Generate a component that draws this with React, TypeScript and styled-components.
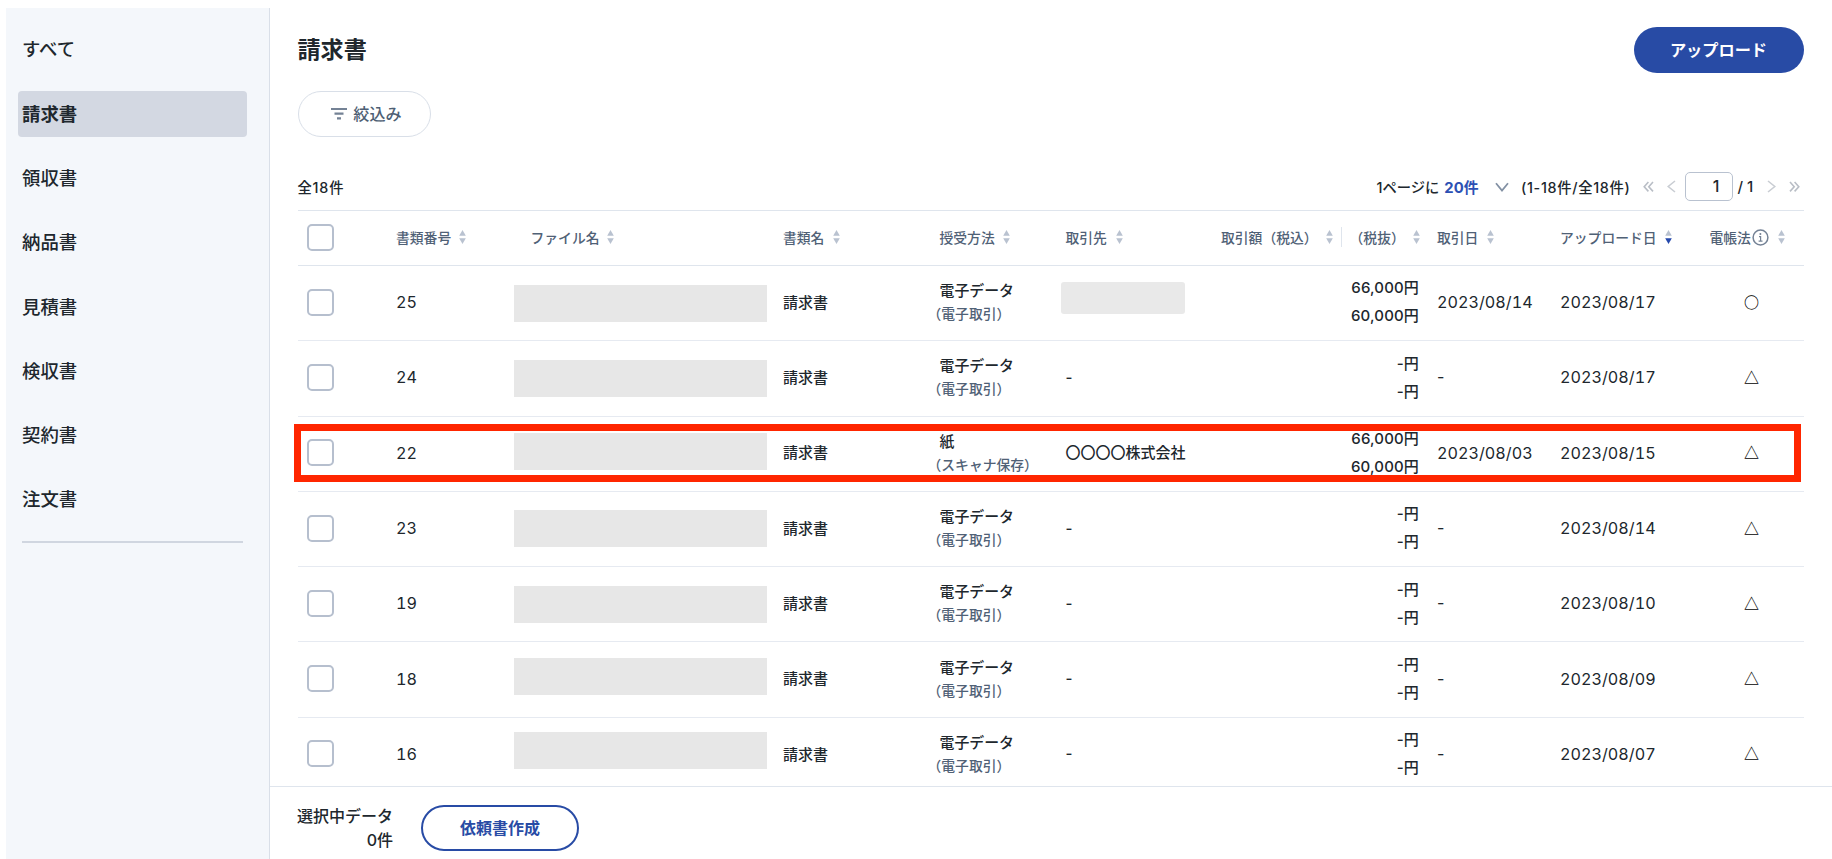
import React from "react";
import styled, { createGlobalStyle, css } from "styled-components";

const GlobalStyle = createGlobalStyle`
  * { box-sizing: border-box; }
  html, body { margin: 0; padding: 0; }
  body {
    background: #fff;
    color: #20272d;
    font-family: Inter, "Noto Sans CJK JP", sans-serif;
    font-weight: 500;
  }
  button, input { font-family: inherit; }
`;

const Page = styled.div`
  display: flex;
  width: 1832px;
  height: 859px;
  padding: 8px 0 0 6px;
  overflow: hidden;
`;

const Sidebar = styled.nav`
  flex: none;
  width: 264px;
  padding: 18.7px 22.5px 0 12px;
  background: #f4f7fb;
  border-right: 1px solid #d9dfe8;
`;

const NavItem = styled.a<{ $active?: boolean }>`
  display: flex;
  align-items: center;
  height: 46px;
  margin-bottom: 18.3px;
  padding: 0 4px 2.6px;
  border-radius: 4px;
  font-size: 18.4px;
  ${(p) =>
    p.$active &&
    css`
      background: #d3d8e2;
      font-weight: 700;
    `}
`;

const NavDivider = styled.hr`
  margin: 0 4px;
  border: 0;
  border-top: 2px solid #d0d6e0;
`;

const Main = styled.main`
  flex: 1;
  min-width: 0;
  display: flex;
  flex-direction: column;
`;

const Content = styled.section`
  flex: none;
  height: 778px;
  padding: 19px 28.5px 0 27.5px;
  overflow: hidden;
`;

const TitleBar = styled.header`
  display: flex;
  justify-content: space-between;
  align-items: center;
  height: 46px;
`;

const Title = styled.h1`
  margin: 0;
  padding-bottom: 4px;
  font-size: 23.1px;
  font-weight: 700;
`;

const UploadButton = styled.button`
  width: 170px;
  height: 46px;
  border: 0;
  border-radius: 23px;
  padding: 0 0 3px;
  background: #284ba5;
  color: #fff;
  font-size: 16.2px;
  font-weight: 700;
`;

const FilterButton = styled.button`
  display: flex;
  align-items: center;
  justify-content: center;
  gap: 6px;
  width: 133px;
  height: 46px;
  margin-top: 18px;
  padding: 0 0 2px 5px;
  border: 1px solid #d9dfe8;
  border-radius: 23px;
  background: #fff;
  color: #4e5f74;
  font-size: 16.1px;
  font-weight: 500;
`;

const ListBar = styled.div`
  display: flex;
  align-items: center;
  justify-content: space-between;
  height: 73px;
  padding-top: 26px;
  font-size: 14.3px;
`;

const Total = styled.span`
  font-size: 14.3px;
  letter-spacing: 0.8px;
`;

const Pager = styled.div`
  display: flex;
  align-items: center;
  padding-right: 4px;
`;

const PageSize = styled.b`
  margin: 0 17px 0 5px;
  color: #2c50b4;
  font-size: 14.8px;
  font-weight: 700;
`;

const PageRange = styled.span`
  margin: 0 12px 0 11.5px;
  font-size: 14.3px;
  letter-spacing: 0.7px;
`;

const PageInput = styled.span`
  width: 48px;
  height: 29px;
  margin: 0 5px 0 9px;
  padding-right: 12px;
  border: 1px solid #b9c2d0;
  border-radius: 5px;
  font-size: 16px;
  line-height: 27px;
  text-align: right;
`;

const PageCount = styled.span`
  width: 18px;
  font-size: 15px;
  white-space: nowrap;
`;

const Table = styled.div`
  position: relative;
`;

const columns = "98.5px 118px 269px 156.5px 126px 155.5px 216px 123px 149.5px 1fr";

const HeadRow = styled.div`
  display: grid;
  grid-template-columns: ${columns};
  align-items: center;
  height: 56px;
  padding-bottom: 2px;
  border-top: 1px solid #dfe5ed;
  border-bottom: 1px solid #dfe5ed;
  color: #506176;
  font-size: 13.8px;
`;

const HeadCell = styled.div<{ $indent?: number; $gap?: number }>`
  display: flex;
  align-items: center;
  gap: ${(p) => p.$gap ?? 8}px;
  padding-left: ${(p) => p.$indent ?? 0}px;
  white-space: nowrap;
`;

const TaxDivider = styled.i`
  width: 1px;
  height: 20px;
  background: #dfe5ed;
`;

const Row = styled.div`
  display: grid;
  grid-template-columns: ${columns};
  align-items: center;
  height: 75.3px;
  padding-bottom: 2px;
  border-bottom: 1px solid #e6eaf1;
  font-size: 15px;
`;

const Cell = styled.div`
  white-space: nowrap;
`;

const NameCell = styled(Cell)`
  padding-bottom: 1.6px;
`;

const NumberCell = styled(Cell)<{ $empty?: boolean }>`
  font-size: 16.2px;
  font-weight: 400;
  font-variant-numeric: ${(p) => (p.$empty ? "normal" : "tabular-nums")};
`;

const Checkbox = styled.span`
  display: block;
  width: 27px;
  height: 27px;
  margin-left: 9.5px;
  border: 2px solid #b6bfce;
  border-radius: 5px;
  background: #fff;
`;

const RedactedFile = styled.div<{ $top: number }>`
  align-self: start;
  width: 253px;
  height: 37px;
  margin-top: ${(p) => p.$top}px;
  background: #e7e7e7;
`;

const RedactedPartner = styled.div`
  width: 124px;
  height: 32px;
  margin: 0 0 8px -5px;
  border-radius: 3px;
  background: #e9e9e9;
`;

const Method = styled(Cell)`
  padding-top: 2px;
  font-size: 14.9px;
  line-height: 23px;
`;

const MethodNote = styled.div`
  margin-left: -12px;
  color: #506176;
  font-size: 13.8px;
`;

const Amount = styled(Cell)`
  padding: 0.6px 18px 0 0;
  line-height: 28px;
  letter-spacing: 0.15px;
  text-align: right;
`;

const Mark = styled(Cell)`
  padding-left: 34.5px;
  padding-bottom: 2px;
  color: #000;
  font-family: "Noto Sans CJK JP", sans-serif;
  font-weight: 700;
`;

const Highlight = styled.div`
  position: absolute;
  top: 214px;
  left: -3.5px;
  width: 1507px;
  height: 58px;
  border: 7px solid #ff2600;
`;

const Footer = styled.footer`
  flex: 1;
  display: flex;
  align-items: flex-start;
  gap: 28px;
  padding: 18px 0 0 27px;
  border-top: 1px solid #dfe5ed;
`;

const Selection = styled.div`
  margin-top: -1px;
  font-size: 16px;
  line-height: 24px;
  text-align: right;
`;

const RequestButton = styled.button`
  width: 158px;
  height: 46px;
  padding: 0 0 2px;
  border: 2px solid #284ba5;
  border-radius: 23px;
  background: #fff;
  color: #284ba5;
  font-size: 16px;
  font-weight: 700;
`;

const Gap = styled.i<{ $width?: number }>`
  width: ${(p) => p.$width ?? 13}px;
`;

const Sort = ({ active }: { active?: boolean }) => (
  <svg width="7" height="14" viewBox="0 0 7 14">
    <path d="M3.5 0 6.8 5.8H0.2z" fill="#b9c2d0" />
    <path d="M3.5 14 6.8 8.2H0.2z" fill={active ? "#2448ac" : "#b9c2d0"} />
  </svg>
);

const FilterIcon = () => (
  <svg width="16" height="13" viewBox="0 0 16 13" fill="none" stroke="#748295" strokeWidth="2.2">
    <path d="M0 2h16M3.5 6.7h9M6 11.4h4" />
  </svg>
);

const ChevronDown = () => (
  <svg width="14" height="10" viewBox="0 0 14 10" fill="none" stroke="#8391a4" strokeWidth="1.8">
    <path d="M1 1.2 7 8.5 13 1.2" />
  </svg>
);

const Arrow = ({ flip, double }: { flip?: boolean; double?: boolean }) => (
  <svg
    width={double ? 11 : 9}
    height="13"
    viewBox={double ? "0 0 11 13" : "0 0 9 13"}
    fill="none"
    stroke={double ? "#b9bec6" : "#c9cdd3"}
    strokeWidth="1.6"
  >
    <g transform={flip ? `translate(${double ? 11 : 9} 0) scale(-1 1)` : undefined}>
      <path d={double ? "M5.4 2 1.2 6.7 5.4 11.4M10 2 5.8 6.7 10 11.4" : "M8 1 1.2 6.5 8 12"} />
    </g>
  </svg>
);

const InfoIcon = () => (
  <svg width="17" height="17" viewBox="0 0 17 17" fill="none" stroke="#748295">
    <circle cx="8.5" cy="8.5" r="7.4" strokeWidth="1.5" />
    <path d="M7 7.6h1.6v4.4M6.6 12.1h3.9" strokeWidth="1.2" />
    <circle cx="8.4" cy="4.9" r="1" fill="#748295" stroke="none" />
  </svg>
);

const categories = ["すべて", "請求書", "領収書", "納品書", "見積書", "検収書", "契約書", "注文書"];

type Doc = {
  id: string;
  top: number;
  paper?: boolean;
  partner?: string;
  amounts?: [string, string];
  date?: string;
  uploaded: string;
  mark: string;
};

const docs: Doc[] = [
  { id: "25", top: 19, partner: "hidden", amounts: ["66,000", "60,000"], date: "2023/08/14", uploaded: "2023/08/17", mark: "○" },
  { id: "24", top: 19, uploaded: "2023/08/17", mark: "△" },
  { id: "22", top: 16, paper: true, partner: "〇〇〇〇株式会社", amounts: ["66,000", "60,000"], date: "2023/08/03", uploaded: "2023/08/15", mark: "△" },
  { id: "23", top: 18.5, uploaded: "2023/08/14", mark: "△" },
  { id: "19", top: 19, uploaded: "2023/08/10", mark: "△" },
  { id: "18", top: 15.8, uploaded: "2023/08/09", mark: "△" },
  { id: "16", top: 14.5, uploaded: "2023/08/07", mark: "△" },
];

export default function App() {
  return (
    <>
      <GlobalStyle />
      <Page>
        <Sidebar>
          {categories.map((name) => (
            <NavItem key={name} $active={name === "請求書"}>
              {name}
            </NavItem>
          ))}
          <NavDivider />
        </Sidebar>
        <Main>
          <Content>
            <TitleBar>
              <Title>請求書</Title>
              <UploadButton>アップロード</UploadButton>
            </TitleBar>
            <FilterButton>
              <FilterIcon />
              絞込み
            </FilterButton>
            <ListBar>
              <Total>全18件</Total>
              <Pager>
                1ページに<PageSize>20件</PageSize>
                <ChevronDown />
                <PageRange>(1-18件/全18件)</PageRange>
                <Arrow double />
                <Gap />
                <Arrow />
                <PageInput>1</PageInput>
                <PageCount>/ 1</PageCount>
                <Gap $width={11} />
                <Arrow flip />
                <Gap />
                <Arrow flip double />
              </Pager>
            </ListBar>
            <Table>
              <HeadRow>
                <Checkbox />
                <HeadCell>書類番号<Sort /></HeadCell>
                <HeadCell $indent={16.5}>ファイル名<Sort /></HeadCell>
                <HeadCell $gap={9}>書類名<Sort /></HeadCell>
                <HeadCell>授受方法<Sort /></HeadCell>
                <HeadCell $gap={9}>取引先<Sort /></HeadCell>
                <HeadCell $gap={8}>
                  取引額（税込）<Sort />
                  <TaxDivider />
                  （税抜）<Sort />
                </HeadCell>
                <HeadCell $gap={9}>取引日<Sort /></HeadCell>
                <HeadCell>アップロード日<Sort active /></HeadCell>
                <HeadCell $gap={1}>電帳法<InfoIcon /><Gap $width={7} /><Sort /></HeadCell>
              </HeadRow>
              {docs.map((d) => (
                <Row key={d.id}>
                  <Checkbox />
                  <NumberCell>{d.id}</NumberCell>
                  <RedactedFile $top={d.top} />
                  <NameCell>請求書</NameCell>
                  <Method>
                    {d.paper ? "紙" : "電子データ"}
                    <MethodNote>{d.paper ? "（スキャナ保存）" : "（電子取引）"}</MethodNote>
                  </Method>
                  {d.partner === "hidden" ? (
                    <RedactedPartner />
                  ) : d.partner ? (
                    <NameCell>{d.partner}</NameCell>
                  ) : (
                    <Cell>-</Cell>
                  )}
                  <Amount>
                    <div>{d.amounts?.[0] ?? "-"}円</div>
                    <div>{d.amounts?.[1] ?? "-"}円</div>
                  </Amount>
                  <NumberCell $empty={!d.date}>{d.date ?? "-"}</NumberCell>
                  <NumberCell>{d.uploaded}</NumberCell>
                  <Mark>{d.mark}</Mark>
                </Row>
              ))}
              <Highlight />
            </Table>
          </Content>
          <Footer>
            <Selection>
              選択中データ
              <div>0件</div>
            </Selection>
            <RequestButton>依頼書作成</RequestButton>
          </Footer>
        </Main>
      </Page>
    </>
  );
}
